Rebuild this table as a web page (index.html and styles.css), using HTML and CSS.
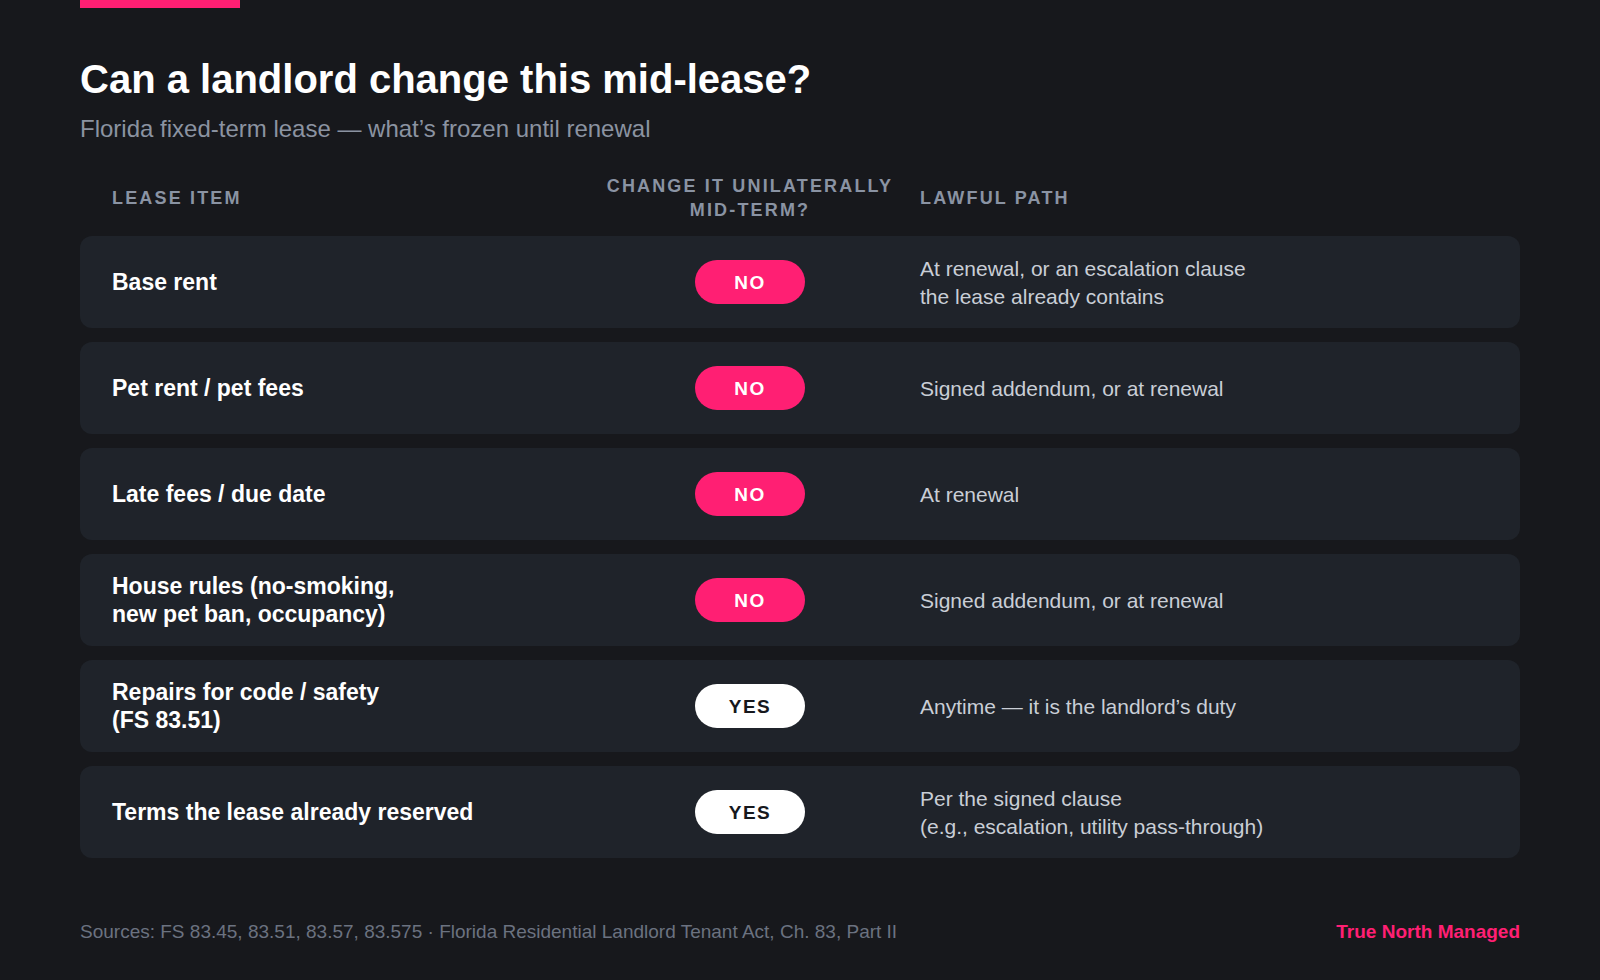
FILE: index.html
```html
<!DOCTYPE html>
<html lang="en">
<head>
<meta charset="utf-8">
<title>Can a landlord change this mid-lease?</title>
<link rel="stylesheet" href="styles.css">
</head>
<body>
<div class="page">
  <div class="accent"></div>
  <h1 class="title">Can a landlord change this mid-lease?</h1>
  <p class="subtitle">Florida fixed-term lease — what’s frozen until renewal</p>

  <div class="table">
    <div class="head">
      <div class="hcell">Lease item</div>
      <div class="hcell center">Change it unilaterally<br>mid-term?</div>
      <div class="hcell">Lawful path</div>
    </div>

    <div class="row">
      <div class="item">Base rent</div>
      <div class="verdict"><span class="pill no">NO</span></div>
      <div class="path">At renewal, or an escalation clause<br>the lease already contains</div>
    </div>
    <div class="row">
      <div class="item">Pet rent / pet fees</div>
      <div class="verdict"><span class="pill no">NO</span></div>
      <div class="path">Signed addendum, or at renewal</div>
    </div>
    <div class="row">
      <div class="item">Late fees / due date</div>
      <div class="verdict"><span class="pill no">NO</span></div>
      <div class="path">At renewal</div>
    </div>
    <div class="row">
      <div class="item">House rules (no-smoking,<br>new pet ban, occupancy)</div>
      <div class="verdict"><span class="pill no">NO</span></div>
      <div class="path">Signed addendum, or at renewal</div>
    </div>
    <div class="row">
      <div class="item">Repairs for code / safety<br>(FS 83.51)</div>
      <div class="verdict"><span class="pill yes">YES</span></div>
      <div class="path">Anytime — it is the landlord’s duty</div>
    </div>
    <div class="row">
      <div class="item">Terms the lease already reserved</div>
      <div class="verdict"><span class="pill yes">YES</span></div>
      <div class="path">Per the signed clause<br>(e.g., escalation, utility pass-through)</div>
    </div>
  </div>

  <footer class="footer">
    <span class="sources">Sources: FS 83.45, 83.51, 83.57, 83.575 · Florida Residential Landlord Tenant Act, Ch. 83, Part II</span>
    <span class="brand">True North Managed</span>
  </footer>
</div>
</body>
</html>
```

FILE: styles.css
```css
* { box-sizing: border-box; }

html, body {
  margin: 0;
  padding: 0;
  background: #17181c;
}

body {
  font-family: "Liberation Sans", Arial, sans-serif;
  color: #ffffff;
  width: 1600px;
  height: 980px;
  overflow: hidden;
}

.page {
  padding: 0 80px;
}

.accent {
  width: 160px;
  height: 8px;
  background: #ff1f73;
}

.title {
  margin: 48px 0 0;
  font-size: 40px;
  line-height: 46px;
  font-weight: 700;
  color: #ffffff;
}

.subtitle {
  margin: 12px 0 0;
  font-size: 24px;
  line-height: 30px;
  color: #8b93a1;
  font-weight: 400;
}

.table {
  margin-top: 28px;
  display: flex;
  flex-direction: column;
  gap: 14px;
}

.head,
.row {
  display: grid;
  grid-template-columns: 468px 300px 1fr;
  column-gap: 20px;
  padding: 0 32px;
  align-items: center;
}

.head {
  height: 56px;
  padding-bottom: 4px;
  margin-bottom: -6px;
}

.hcell {
  font-size: 18px;
  line-height: 24px;
  font-weight: 700;
  letter-spacing: 0.12em;
  text-transform: uppercase;
  color: #8a93a3;
}

.hcell.center {
  text-align: center;
}

.row {
  height: 92px;
  background: #1f232a;
  border-radius: 12px;
}

.item {
  font-size: 23px;
  line-height: 28px;
  font-weight: 700;
  color: #ffffff;
}

.verdict {
  display: flex;
  justify-content: center;
}

.pill {
  display: inline-flex;
  align-items: center;
  justify-content: center;
  width: 110px;
  height: 44px;
  padding-top: 2px;
  border-radius: 22px;
  font-size: 19px;
  font-weight: 700;
  letter-spacing: 0.08em;
}

.pill.no {
  background: #ff1f73;
  color: #ffffff;
}

.pill.yes {
  background: #ffffff;
  color: #16181d;
}

.path {
  font-size: 21px;
  line-height: 28px;
  padding-top: 2px;
  color: #c9ced6;
}

.footer {
  margin-top: 63px;
  display: flex;
  justify-content: space-between;
  align-items: baseline;
}

.sources {
  font-size: 19px;
  color: #6b7280;
}

.brand {
  font-size: 19px;
  font-weight: 700;
  color: #ff1f73;
}
```
